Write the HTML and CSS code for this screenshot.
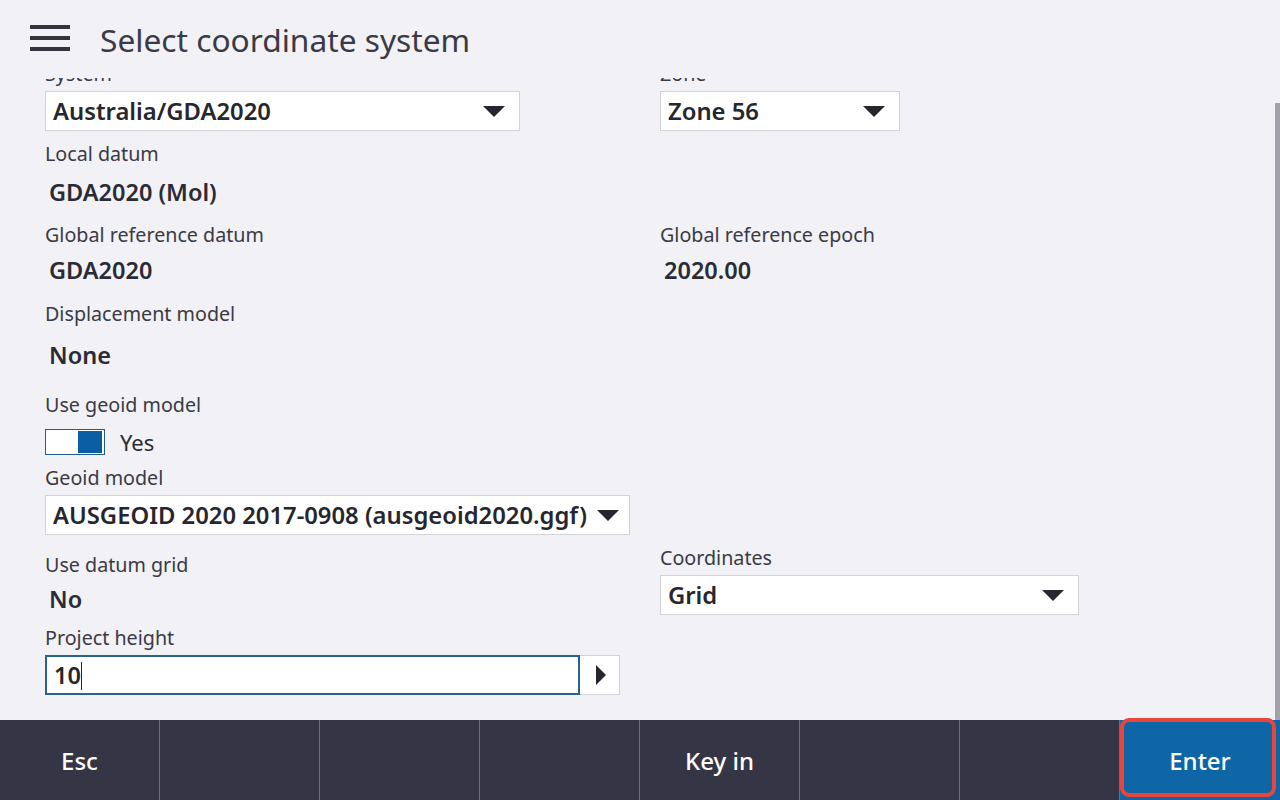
FILE: index.html
```html
<!DOCTYPE html>
<html lang="en">
<head>
    <meta charset="UTF-8">
    <title>Select coordinate system</title>
    <link rel="stylesheet" href="styles.css">
</head>
<body>
    <div class="app">
        <header class="topbar">
            <svg class="hamburger" width="40" height="30" viewBox="0 0 40 30">
                <rect x="0" y="2" width="40" height="4" fill="#34343f"/>
                <rect x="0" y="13" width="40" height="4" fill="#34343f"/>
                <rect x="0" y="24" width="40" height="4" fill="#34343f"/>
            </svg>
            <h1 class="title">Select coordinate system</h1>
        </header>

        <main class="content">
            <div class="form">
                <!-- System / Zone -->
                <div class="row">
                    <div class="col-left">
                        <div class="label">System</div>
                        <div class="select select-system"><span>Australia/GDA2020</span><i class="caret"></i></div>
                    </div>
                    <div class="col-right">
                        <div class="label">Zone</div>
                        <div class="select select-zone"><span>Zone 56</span><i class="caret"></i></div>
                    </div>
                </div>

                <div class="row row-local">
                    <div class="col-left">
                        <div class="label">Local datum</div>
                        <div class="value value-local">GDA2020 (Mol)</div>
                    </div>
                </div>

                <div class="row row-global">
                    <div class="col-left">
                        <div class="label">Global reference datum</div>
                        <div class="value value-global">GDA2020</div>
                    </div>
                    <div class="col-right">
                        <div class="label">Global reference epoch</div>
                        <div class="value value-global">2020.00</div>
                    </div>
                </div>

                <div class="row row-disp">
                    <div class="col-left">
                        <div class="label">Displacement model</div>
                        <div class="value value-disp">None</div>
                    </div>
                </div>

                <div class="row row-usegeoid">
                    <div class="col-left">
                        <div class="label">Use geoid model</div>
                        <div class="toggle-line">
                            <div class="toggle"><div class="knob"></div></div>
                            <span class="toggle-text">Yes</span>
                        </div>
                    </div>
                </div>

                <div class="row row-geoid">
                    <div class="col-left">
                        <div class="label">Geoid model</div>
                        <div class="select select-geoid"><span>AUSGEOID 2020 2017-0908 (ausgeoid2020.ggf)</span><i class="caret"></i></div>
                    </div>
                </div>

                <div class="row row-grid">
                    <div class="col-left col-datumgrid">
                        <div class="label">Use datum grid</div>
                        <div class="value value-grid">No</div>
                    </div>
                    <div class="col-right">
                        <div class="label">Coordinates</div>
                        <div class="select select-coords"><span>Grid</span><i class="caret"></i></div>
                    </div>
                </div>

                <div class="row row-height">
                    <div class="col-left">
                        <div class="label">Project height</div>
                        <div class="input-line">
                            <div class="input">10<span class="cursor"></span></div>
                            <div class="input-btn"><i class="caret-right"></i></div>
                        </div>
                    </div>
                </div>
            </div>
            <div class="scrollbar"></div>
        </main>

        <footer class="softkeys">
            <div class="key">Esc</div>
            <div class="key"></div>
            <div class="key"></div>
            <div class="key"></div>
            <div class="key">Key in</div>
            <div class="key"></div>
            <div class="key"></div>
            <div class="key key-enter">Enter</div>
            <div class="highlight"></div>
        </footer>
    </div>
</body>
</html>
```

FILE: styles.css
```css
body {
    margin: 0;
    background: #f1f1f6;
    font-family: "Noto Sans", "Open Sans", sans-serif;
    color: #2b2b35;
}

.app {
    width: 1280px;
    height: 800px;
    display: flex;
    flex-direction: column;
    overflow: hidden;
}

.topbar {
    height: 78px;
    flex-shrink: 0;
    display: flex;
    align-items: center;
    padding-left: 30px;
    position: relative;
    z-index: 2;
    background: #f1f1f6;
}

.hamburger {
    margin-top: -2px;
}

.title {
    margin: 0 0 0 30px;
    font-size: 31.7px;
    font-weight: 400;
    color: #3a3a45;
}

.content {
    flex: 1;
    position: relative;
    overflow: hidden;
}

.form {
    margin-top: -16px;
    padding-left: 45px;
}

.row {
    display: flex;
}

.col-left {
    width: 615px;
}

.col-right {
    width: 420px;
}

.label {
    font-size: 19.7px;
    line-height: 24px;
    color: #3a3a45;
}

.value {
    font-size: 23.5px;
    line-height: 30px;
    font-weight: 600;
    padding-left: 4px;
    color: #2b2b35;
}

.select {
    margin-top: 5px;
    height: 40px;
    box-sizing: border-box;
    background: #fff;
    border: 1px solid #d2d2d9;
    display: flex;
    align-items: center;
    justify-content: space-between;
    padding: 0 14px 0 7px;
    font-size: 23.8px;
    font-weight: 600;
    color: #26262e;
}

.caret {
    width: 0;
    height: 0;
    border-left: 11px solid transparent;
    border-right: 11px solid transparent;
    border-top: 11px solid #26262e;
}

.select-system { width: 475px; }
.select-zone { width: 240px; }
.select-geoid { width: 585px; padding-right: 10px; }
.select-coords { width: 419px; }

.row-local { margin-top: 11px; }
.value-local { margin-top: 11px; }

.row-global { margin-top: 16px; }
.value-global { margin-top: 8px; }

.row-disp { margin-top: 17px; }
.value-disp { margin-top: 14px; }

.row-usegeoid { margin-top: 23px; }

.toggle-line {
    margin-top: 12px;
    display: flex;
    align-items: center;
    height: 25px;
}

.toggle {
    width: 60px;
    height: 26px;
    box-sizing: border-box;
    border: 1px solid #1f5f8c;
    background: #fff;
    display: flex;
    justify-content: flex-end;
    padding: 1px 2px;
}

.knob {
    width: 24px;
    height: 100%;
    background: #0b5ea3;
}

.toggle-text {
    margin-left: 15px;
    font-size: 22px;
    color: #2b2b35;
}

.row-geoid { margin-top: 12px; }

.row-grid { margin-top: 11px; }
.col-datumgrid { padding-top: 7px; }
.value-grid { margin-top: 7px; }

.row-height { margin-top: 11px; }

.input-line {
    margin-top: 5px;
    display: flex;
    height: 40px;
}

.input {
    width: 535px;
    box-sizing: border-box;
    border: 2px solid #2a6388;
    background: #fff;
    font-size: 23.5px;
    font-weight: 600;
    line-height: 36px;
    padding-left: 7px;
    color: #26262e;
}

.cursor {
    display: inline-block;
    width: 1px;
    height: 28px;
    background: #26262e;
    vertical-align: -6px;
}

.input-btn {
    width: 40px;
    box-sizing: border-box;
    border: 1px solid #d2d2d9;
    border-left: none;
    background: #fff;
    display: flex;
    align-items: center;
    justify-content: center;
}

.caret-right {
    width: 0;
    height: 0;
    border-top: 10px solid transparent;
    border-bottom: 10px solid transparent;
    border-left: 10px solid #26262e;
    margin-left: 2px;
}

.scrollbar {
    position: absolute;
    right: 0;
    top: 25px;
    bottom: 0;
    width: 5px;
    background: #a2a2aa;
}

.softkeys {
    height: 80px;
    flex-shrink: 0;
    display: flex;
    background: #363545;
    position: relative;
}

.key {
    width: 160px;
    box-sizing: border-box;
    border-right: 1px solid #6f6f7c;
    display: flex;
    align-items: center;
    justify-content: center;
    color: #fff;
    font-size: 24px;
    font-weight: 500;
}

.key-enter {
    border-right: none;
    background: #0e66a6;
}

.highlight {
    position: absolute;
    left: 1120px;
    top: -2px;
    width: 156px;
    height: 79px;
    box-sizing: border-box;
    border: 4px solid #e8463c;
    border-radius: 9px;
}
```
